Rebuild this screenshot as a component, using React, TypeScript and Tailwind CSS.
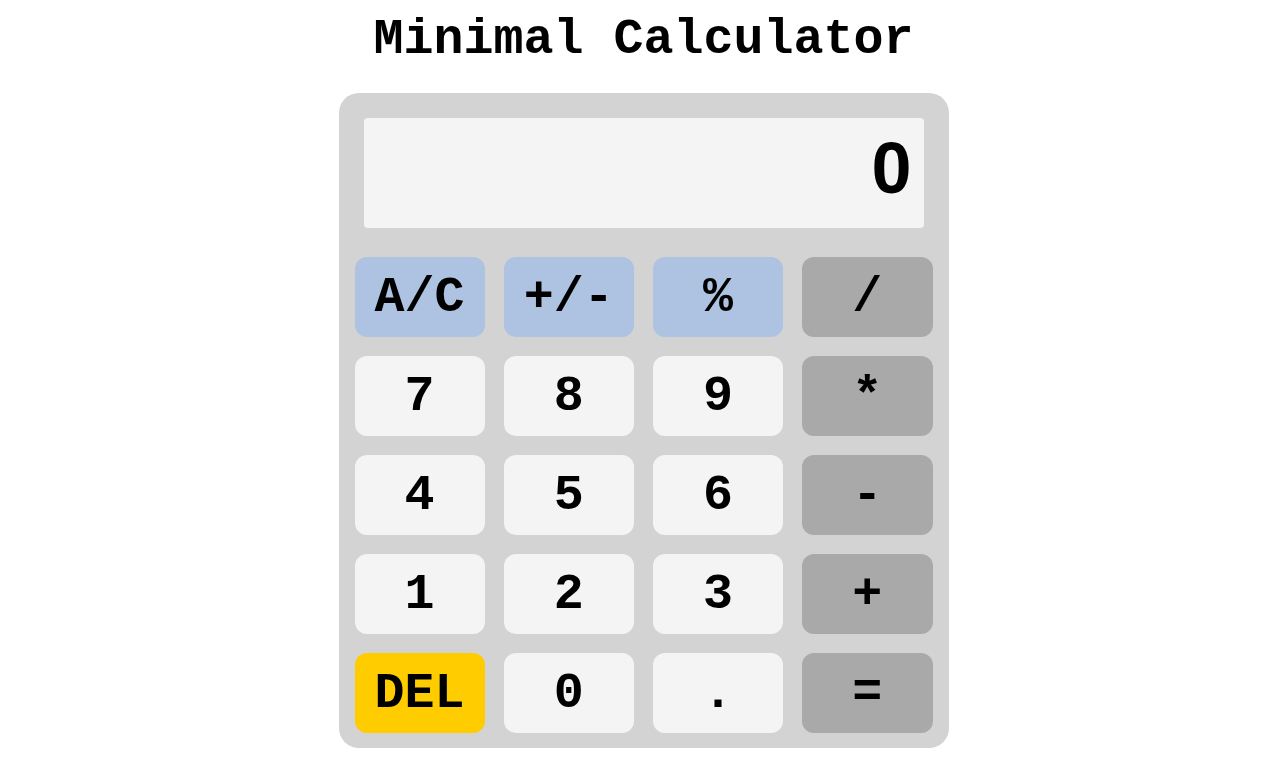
const KEYS: { label: string; kind: "fn" | "num" | "op" | "del" }[] = [
  { label: "A/C", kind: "fn" },
  { label: "+/-", kind: "fn" },
  { label: "%", kind: "fn" },
  { label: "/", kind: "op" },
  { label: "7", kind: "num" },
  { label: "8", kind: "num" },
  { label: "9", kind: "num" },
  { label: "*", kind: "op" },
  { label: "4", kind: "num" },
  { label: "5", kind: "num" },
  { label: "6", kind: "num" },
  { label: "-", kind: "op" },
  { label: "1", kind: "num" },
  { label: "2", kind: "num" },
  { label: "3", kind: "num" },
  { label: "+", kind: "op" },
  { label: "DEL", kind: "del" },
  { label: "0", kind: "num" },
  { label: ".", kind: "num" },
  { label: "=", kind: "op" },
];

const KIND_BG = {
  fn: "bg-[#aec3e1]",
  num: "bg-[#f4f4f4]",
  op: "bg-[#a9a9a9]",
  del: "bg-[#ffcc00]",
};

export default function App() {
  return (
    <div className="min-h-screen bg-white flex flex-col items-center pl-[22px] font-['Liberation_Mono',monospace] font-bold text-black">
      <h1 className="mt-[15px] text-[50px] leading-[50px] font-bold">Minimal Calculator</h1>

      <div className="mt-[28px] w-[610px] rounded-[20px] bg-[#d3d3d3] px-[16px] pt-[25px] pb-[15px]">
        {/* Display */}
        <div className="mx-[9px] h-[110px] rounded-[4px] bg-[#f4f4f4] flex items-center justify-end pr-[12px] pb-[10px]">
          <span className="font-['Liberation_Sans',sans-serif] font-bold text-[72px] leading-none">0</span>
        </div>

        {/* Keypad */}
        <div className="mt-[29px] grid grid-cols-4 gap-x-[19px] gap-y-[19px]">
          {KEYS.map((k) => (
            <button
              key={k.label}
              className={`h-[80px] rounded-[12px] flex items-center justify-center font-['Liberation_Mono',monospace] text-[50px] font-bold ${KIND_BG[k.kind]}`}
            >
              {k.label}
            </button>
          ))}
        </div>
      </div>
    </div>
  );
}
